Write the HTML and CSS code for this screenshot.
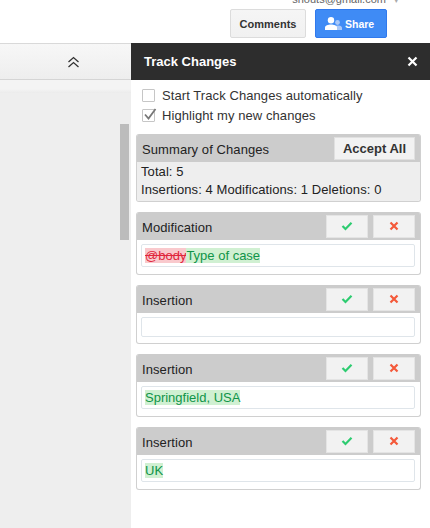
FILE: index.html
```html
<!DOCTYPE html>
<html lang="en">
<head>
    <meta charset="UTF-8">
    <meta name="viewport" content="width=device-width, initial-scale=1.0">
    <title>Track Changes</title>
    <link rel="stylesheet" href="styles.css">
</head>
<body>
    <header class="topbar">
        <div class="account">shouts@gmail.com <span class="caret">▾</span></div>
        <button class="btn-comments">Comments</button>
        <button class="btn-share">
            <svg width="17" height="13" viewBox="0 0 17 13">
                <circle cx="12.500" cy="5.500" r="2.400" fill="#a9c8f8"/>
                <path d="M11 13v-4.200c1-.5 2-.5 3-.3 1.500.3 3 1 3 2.300V13z" fill="#a9c8f8"/>
                <circle cx="6" cy="3.200" r="3.200" fill="#fff"/>
                <path d="M0 13v-2.500c0-2 3-3 6-3s6 1 6 3V13z" fill="#fff"/>
            </svg>
            Share
        </button>
    </header>

    <div class="main">
        <div class="doc-side">
            <div class="toolbar">
                <svg width="13" height="12" viewBox="0 0 13 12">
                    <path d="M1.500 6 6.500 1.500 11.500 6M1.500 11 6.500 6.500 11.500 11" fill="none" stroke="#333" stroke-width="1.300"/>
                </svg>
            </div>
            <div class="ruler"></div>
            <div class="scroll-thumb"></div>
        </div>

        <aside class="panel">
            <div class="panel-head">
                <h1>Track Changes</h1>
                <svg width="11" height="11" viewBox="0 0 11 11">
                    <path d="M1.500 1.500 9.500 9.500M9.500 1.500 1.500 9.500" stroke="#fff" stroke-width="2.200"/>
                </svg>
            </div>

            <div class="options">
                <label class="option"><span class="check"></span>Start Track Changes automatically</label>
                <label class="option">
                    <span class="check">
                        <svg width="15" height="13" viewBox="0 0 15 13">
                            <path d="M3 6.500 6.500 10.500 13.500 1" fill="none" stroke="#777" stroke-width="1.800"/>
                        </svg>
                    </span>
                    Highlight my new changes
                </label>
            </div>

            <section class="card summary">
                <div class="card-head">
                    <span>Summary of Changes</span>
                    <button class="btn-accept-all">Accept All</button>
                </div>
                <div class="summary-body">
                    <p>Total: 5</p>
                    <p>Insertions: 4 Modifications: 1 Deletions: 0</p>
                </div>
            </section>

            <section class="card">
                <div class="card-head">
                    <span>Modification</span>
                    <div class="actions">
                        <button class="btn-icon"><svg width="12" height="10" viewBox="0 0 12 10"><path d="M1.500 5 4.500 8 10.500 1.800" fill="none" stroke="#2ecc71" stroke-width="2.200"/></svg></button>
                        <button class="btn-icon"><svg width="10" height="10" viewBox="0 0 10 10"><path d="M1.500 1.500 8.500 8.500M8.500 1.500 1.500 8.500" stroke="#f4593a" stroke-width="2.200"/></svg></button>
                    </div>
                </div>
                <div class="card-body">
                    <div class="field"><del>@body</del><ins>Type of case</ins></div>
                </div>
            </section>

            <section class="card">
                <div class="card-head">
                    <span>Insertion</span>
                    <div class="actions">
                        <button class="btn-icon"><svg width="12" height="10" viewBox="0 0 12 10"><path d="M1.500 5 4.500 8 10.500 1.800" fill="none" stroke="#2ecc71" stroke-width="2.200"/></svg></button>
                        <button class="btn-icon"><svg width="10" height="10" viewBox="0 0 10 10"><path d="M1.500 1.500 8.500 8.500M8.500 1.500 1.500 8.500" stroke="#f4593a" stroke-width="2.200"/></svg></button>
                    </div>
                </div>
                <div class="card-body body-empty">
                    <div class="field field-empty"></div>
                </div>
            </section>

            <section class="card">
                <div class="card-head">
                    <span>Insertion</span>
                    <div class="actions">
                        <button class="btn-icon"><svg width="12" height="10" viewBox="0 0 12 10"><path d="M1.500 5 4.500 8 10.500 1.800" fill="none" stroke="#2ecc71" stroke-width="2.200"/></svg></button>
                        <button class="btn-icon"><svg width="10" height="10" viewBox="0 0 10 10"><path d="M1.500 1.500 8.500 8.500M8.500 1.500 1.500 8.500" stroke="#f4593a" stroke-width="2.200"/></svg></button>
                    </div>
                </div>
                <div class="card-body">
                    <div class="field"><ins>Springfield, USA</ins></div>
                </div>
            </section>

            <section class="card">
                <div class="card-head">
                    <span>Insertion</span>
                    <div class="actions">
                        <button class="btn-icon"><svg width="12" height="10" viewBox="0 0 12 10"><path d="M1.500 5 4.500 8 10.500 1.800" fill="none" stroke="#2ecc71" stroke-width="2.200"/></svg></button>
                        <button class="btn-icon"><svg width="10" height="10" viewBox="0 0 10 10"><path d="M1.500 1.500 8.500 8.500M8.500 1.500 1.500 8.500" stroke="#f4593a" stroke-width="2.200"/></svg></button>
                    </div>
                </div>
                <div class="card-body">
                    <div class="field"><ins>UK</ins></div>
                </div>
            </section>
        </aside>
    </div>
</body>
</html>
```

FILE: styles.css
```css
body {
    font-family: "Liberation Sans", Arial, sans-serif;
    font-size: 13px;
    letter-spacing: 0.08px;
    color: #222;
    margin: 0;
    padding: 0;
    height: 528px;
    overflow: hidden;
    background-color: #fff;
}

button {
    font-family: inherit;
    cursor: pointer;
}

.topbar {
    position: relative;
    display: flex;
    justify-content: flex-end;
    gap: 9px;
    height: 43px;
    box-sizing: border-box;
    padding: 9px 43px 0 0;
}

.account {
    position: absolute;
    top: -7px;
    right: 31px;
    font-size: 11px;
    letter-spacing: 0;
    color: #666;
    white-space: nowrap;
}

.caret {
    margin-left: 5px;
    font-size: 9px;
    color: #aaa;
}

.btn-comments {
    width: 76px;
    height: 29px;
    padding: 0;
    font-size: 11px;
    font-weight: bold;
    color: #333;
    background: linear-gradient(#f5f5f5, #f1f1f1);
    border: 1px solid #dcdcdc;
    border-radius: 2px;
}

.btn-share {
    display: flex;
    align-items: center;
    gap: 3px;
    width: 72px;
    height: 29px;
    padding: 0 0 0 9px;
    font-size: 10.5px;
    font-weight: bold;
    color: #fff;
    background: #3f8bf5;
    border: 1px solid #3079ed;
    border-radius: 2px;
}

.main {
    display: flex;
    height: 485px;
}

.doc-side {
    position: relative;
    width: 131px;
    background-color: #eee;
}

.toolbar {
    display: flex;
    justify-content: flex-end;
    align-items: center;
    height: 37px;
    box-sizing: border-box;
    padding-right: 51px;
    background: linear-gradient(#f7f7f7, #eee);
    border-top: 1px solid #d9d9d9;
    border-bottom: 1px solid #d5d5d5;
}

.ruler {
    height: 13px;
    background: linear-gradient(#f4f4f4, #f4f4f4 70%, #ebebeb);
}

.scroll-thumb {
    position: absolute;
    top: 81px;
    left: 120px;
    width: 9px;
    height: 116px;
    background-color: #bcbcbc;
}

.panel {
    flex: 1;
    box-sizing: border-box;
    padding: 0 9px 0 5px;
    background-color: #fff;
}

.panel-head {
    display: flex;
    justify-content: space-between;
    align-items: center;
    height: 37px;
    margin: 0 -9px 0 -5px;
    padding: 0 12px 0 13px;
    background-color: #2d2d2d;
}

.panel-head h1 {
    margin: 0;
    font-size: 13px;
    letter-spacing: 0;
    color: #fff;
}

.options {
    padding: 5px 0 9px 6px;
}

.option {
    display: flex;
    align-items: center;
    gap: 7px;
    height: 20px;
    color: #333;
}

.check {
    position: relative;
    width: 11px;
    height: 11px;
    background: #fff;
    border: 1px solid #c6c6c6;
    border-radius: 1px;
}

.check svg {
    position: absolute;
    top: -2px;
    left: -1px;
}

.card {
    margin-bottom: 10px;
    border: 1px solid #d0d0d0;
    border-top: 0;
    border-radius: 3px;
    overflow: hidden;
}

.card-head {
    display: flex;
    justify-content: space-between;
    align-items: center;
    height: 28px;
    box-sizing: border-box;
    padding: 0 5px 0 5px;
    background-color: #ccc;
}

.card-head > span {
    padding-top: 3px;
}

.btn-accept-all {
    width: 81px;
    height: 23px;
    padding: 0;
    font-size: 13px;
    font-weight: bold;
    color: #333;
    background: #f2f2f2;
    border: 1px solid #e0e0e0;
}

.summary-body {
    padding: 1px 4px 2px;
    background-color: #eee;
    line-height: 18px;
}

.summary-body p {
    margin: 0;
}

.actions {
    display: flex;
    gap: 5px;
}

.btn-icon {
    display: flex;
    align-items: center;
    justify-content: center;
    width: 42px;
    height: 23px;
    padding: 0;
    background: #f2f2f2;
    border: 1px solid #e4e4e4;
}

.card-body {
    padding: 4px 5px 7px 4px;
}

.body-empty {
    padding-bottom: 6px;
}

.field {
    display: flex;
    align-items: center;
    height: 23px;
    box-sizing: border-box;
    padding: 0 3px;
    letter-spacing: 0;
    border: 1px solid #dfe5ea;
    border-radius: 2px;
}

.field-empty {
    height: 20px;
}

del {
    line-height: 15px;
    color: #e0263c;
    background-color: #f9c9cd;
}

ins {
    line-height: 15px;
    text-decoration: none;
    color: #0f9448;
    background-color: #d0f0d2;
}
```
